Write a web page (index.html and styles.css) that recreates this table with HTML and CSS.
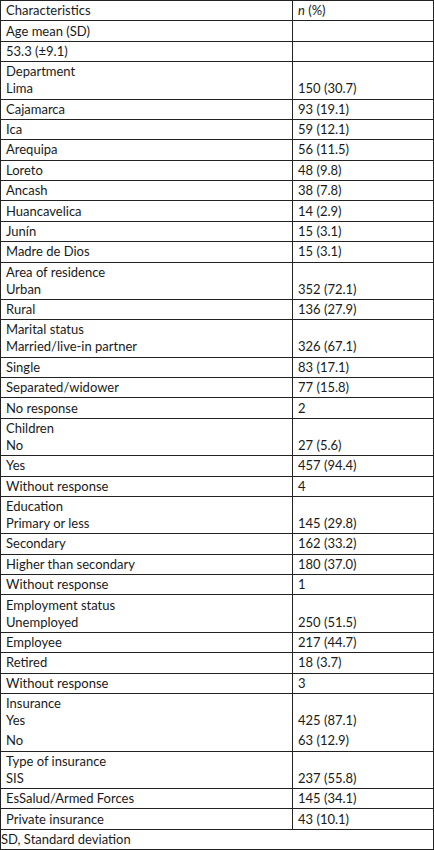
FILE: index.html
```html
<!DOCTYPE html>
<html>
<head>
<meta charset="utf-8">
<link rel="stylesheet" href="styles.css">
</head>
<body>
<table class="tbl">
  <colgroup><col class="c1"><col class="c2"></colgroup>
  <tr><td>Characteristics</td><td><i>n</i> (%)</td></tr>
  <tr><td>Age mean (SD)</td><td></td></tr>
  <tr><td>53.3 (±9.1)</td><td></td></tr>
  <tr><td><div>Department</div><div>Lima</div></td><td class="bot">150 (30.7)</td></tr>
  <tr><td>Cajamarca</td><td>93 (19.1)</td></tr>
  <tr><td>Ica</td><td>59 (12.1)</td></tr>
  <tr><td>Arequipa</td><td>56 (11.5)</td></tr>
  <tr><td>Loreto</td><td>48 (9.8)</td></tr>
  <tr><td>Ancash</td><td>38 (7.8)</td></tr>
  <tr><td>Huancavelica</td><td>14 (2.9)</td></tr>
  <tr><td>Junín</td><td>15 (3.1)</td></tr>
  <tr><td>Madre de Dios</td><td>15 (3.1)</td></tr>
  <tr><td><div>Area of residence</div><div>Urban</div></td><td class="bot">352 (72.1)</td></tr>
  <tr><td>Rural</td><td>136 (27.9)</td></tr>
  <tr><td><div>Marital status</div><div>Married/live-in partner</div></td><td class="bot">326 (67.1)</td></tr>
  <tr><td>Single</td><td>83 (17.1)</td></tr>
  <tr><td>Separated/widower</td><td>77 (15.8)</td></tr>
  <tr><td>No response</td><td>2</td></tr>
  <tr><td><div>Children</div><div>No</div></td><td class="bot">27 (5.6)</td></tr>
  <tr><td>Yes</td><td>457 (94.4)</td></tr>
  <tr><td>Without response</td><td>4</td></tr>
  <tr><td><div>Education</div><div>Primary or less</div></td><td class="bot">145 (29.8)</td></tr>
  <tr><td>Secondary</td><td>162 (33.2)</td></tr>
  <tr><td>Higher than secondary</td><td>180 (37.0)</td></tr>
  <tr><td>Without response</td><td>1</td></tr>
  <tr><td><div>Employment status</div><div>Unemployed</div></td><td class="bot">250 (51.5)</td></tr>
  <tr><td>Employee</td><td>217 (44.7)</td></tr>
  <tr><td>Retired</td><td>18 (3.7)</td></tr>
  <tr><td>Without response</td><td>3</td></tr>
  <tr><td><div>Insurance</div><div>Yes</div><div class="gap">No</div></td><td class="bot"><div>425 (87.1)</div><div class="gap">63 (12.9)</div></td></tr>
  <tr><td><div>Type of insurance</div><div>SIS</div></td><td class="bot">237 (55.8)</td></tr>
  <tr><td>EsSalud/Armed Forces</td><td>145 (34.1)</td></tr>
  <tr><td>Private insurance</td><td>43 (10.1)</td></tr>
  <tr><td class="foot" colspan="2">SD, Standard deviation</td></tr>
</table>
</body>
</html>
```

FILE: styles.css
```css
html, body {
  margin: 0;
  padding: 0;
  background: #fff;
}
.tbl {
  width: 434px;
  table-layout: fixed;
  border-collapse: separate;
  border-spacing: 0;
  border-top: 1px solid #222;
  border-left: 1px solid #222;
  font-family: Lato, "Liberation Sans", sans-serif;
  font-size: 13px;
  line-height: 17px;
  color: #1a1a1a;
}
.c1 { width: 292px; }
.c2 { width: 141px; }
.tbl td {
  border-right: 1px solid #222;
  border-bottom: 1px solid #222;
  padding: 1.2px 5px;
  vertical-align: top;
  white-space: nowrap;
}
.tbl td.bot {
  vertical-align: bottom;
}
.tbl td.foot {
  padding-left: 0;
}
.gap {
  margin-top: 3.4px;
}
```
